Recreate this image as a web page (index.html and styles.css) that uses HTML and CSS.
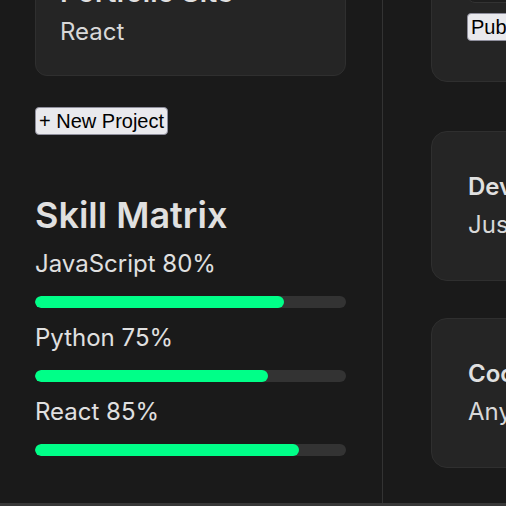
FILE: index.html
```html
<!DOCTYPE html>
<html>
<head>
<meta charset="utf-8">
<link rel="stylesheet" href="styles.css">
</head>
<body>
<div class="page">
  <main class="layout">
    <section class="col col-left">
      <div class="card project">
        <h3 class="project-title">Portfolio Site</h3>
        <p class="project-tech">React</p>
      </div>
      <button class="btn new-btn">+ New Project</button>
      <h2 class="section-title">Skill Matrix</h2>
      <div class="skill">
        <div class="skill-label">JavaScript 80%</div>
        <div class="track"><div class="fill" style="width:80%"></div></div>
      </div>
      <div class="skill">
        <div class="skill-label">Python 75%</div>
        <div class="track"><div class="fill" style="width:75%"></div></div>
      </div>
      <div class="skill">
        <div class="skill-label">React 85%</div>
        <div class="track"><div class="fill" style="width:85%"></div></div>
      </div>
    </section>
    <section class="col col-right">
      <div class="card compose">
        <textarea class="compose-input"></textarea>
        <button class="btn publish-btn">Publish</button>
      </div>
      <div class="card post">
        <div class="post-author">DevMaster</div>
        <div class="post-text">Just shipped a new feature!</div>
      </div>
      <div class="card post">
        <div class="post-author">CoolCoder</div>
        <div class="post-text">Anyone up for a hackathon?</div>
      </div>
    </section>
  </main>
  <footer class="footer"></footer>
</div>
</body>
</html>
```

FILE: styles.css
```css
html, body {
  margin: 0;
  padding: 0;
  background: #1a1a1a;
  overflow: hidden;
}
body {
  font-family: Inter, "Noto Sans", sans-serif;
  color: #e0e0e0;
  width: 506px;
  height: 506px;
}
.page {
  display: flex;
  flex-direction: column;
  height: 506px;
  width: 1100px;
}
.layout {
  display: grid;
  grid-template-columns: 383px 1fr;
  height: 503px;
  overflow: hidden;
}
.col {
  display: flex;
  flex-direction: column;
  justify-content: flex-end;
  align-items: stretch;
  min-height: 0;
  overflow: hidden;
}
.col-left {
  border-right: 1px solid #333;
  padding: 0 36px 47px 35px;
}
.col-right {
  padding: 0 48px 35px 48px;
}
.card {
  flex: none;
  background: #252525;
  border: 1px solid #2f2f2f;
  border-radius: 12px;
}
.project {
  padding: 22px 24px 26px;
}
.project-title {
  margin: 0 0 6px;
  font-size: 28px;
  font-weight: 600;
  line-height: 34px;
  white-space: nowrap;
}
.project-tech {
  margin: 0;
  font-size: 24px;
  line-height: 34px;
  color: #d8d8d8;
}
.btn {
  font-family: "Liberation Sans", Arial, sans-serif;
  font-size: 20px;
  line-height: 22px;
  color: #000;
  background: #e9e9ed;
  border: 1px solid #8f8f9d;
  border-radius: 4px;
  padding: 2px 3px;
}
.new-btn {
  flex: none;
  align-self: flex-start;
  margin-top: 31px;
}
.section-title {
  flex: none;
  margin: 58px 0 10px;
  font-size: 36px;
  font-weight: 600;
  line-height: 44px;
}
.skill {
  flex: none;
  margin-bottom: 13px;
}
.skill:last-child {
  margin-bottom: 0;
}
.skill-label {
  font-size: 24px;
  line-height: 34px;
  margin-bottom: 15px;
}
.track {
  height: 12px;
  background: #333;
  border-radius: 6px;
  overflow: hidden;
}
.fill {
  height: 100%;
  background: #00ff88;
  border-radius: 6px;
}
.compose {
  display: flex;
  flex-direction: column;
  align-items: flex-start;
  padding: 35px 35px 40px;
  margin-bottom: 49px;
  border-radius: 16px;
}
.compose-input {
  width: 100%;
  box-sizing: border-box;
  height: 80px;
  background: #1e1e1e;
  border: 1px solid #333;
  border-radius: 8px;
  margin: 0 0 10px;
  resize: none;
}
.post {
  padding: 36px;
  margin-bottom: 37px;
  border-radius: 16px;
  white-space: nowrap;
}
.post:last-child {
  margin-bottom: 0;
}
.post-author {
  font-size: 24px;
  font-weight: 600;
  line-height: 38px;
}
.post-text {
  font-size: 24px;
  line-height: 38px;
  color: #d8d8d8;
}
.footer {
  flex: none;
  height: 3px;
  background: #383838;
}
```
